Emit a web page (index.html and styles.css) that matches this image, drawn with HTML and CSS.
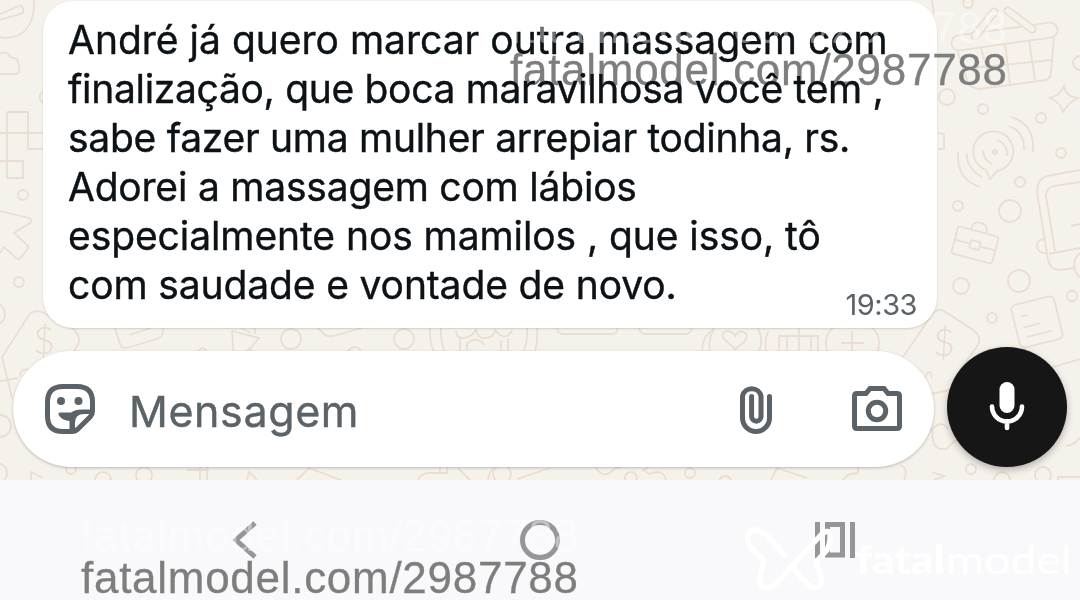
FILE: index.html
```
<!DOCTYPE html>
<html lang="pt-BR">
<head>
    <meta charset="UTF-8">
    <meta name="viewport" content="width=device-width, initial-scale=1.0">
    <title>Conversa</title>
    <link rel="stylesheet" href="styles.css">
</head>
<body>
    <div class="screen">
        <main class="chat">
            <svg class="wallpaper" viewBox="0 0 1080 480" width="1080" height="480" aria-hidden="true">
                <!-- left side -->
                <path d="M34 0Q35 38 4 38L0 37M0 14L21 5Q24 9 23 13L0 20M0 54Q8 50 10 57L17 59Q20 68 19 72L17 74H0"/>
                <path d="M0 133H43M7 112H28V149H43M7 112V178H23V161H0M43 91Q36 97 43 103"/>
                <path d="M0 211L29 218Q33 220 30 223L14 233L28 246Q29 249 20 258Q18 261 14 256L4 247L0 253"/>
                <circle cx="23" cy="195" r="5"/><circle cx="19" cy="282" r="5"/><circle cx="-6" cy="314" r="11"/>
                <path d="M2 357L29 315Q33 310 42 312L72 328Q82 336 78 344L65 370M2 357L12 398M0 381L18 378M20 377Q20 367 30 370"/>
                <circle cx="0" cy="426" r="11"/><circle cx="-3" cy="473" r="10"/>
                <!-- strip under the bubble -->
                <path d="M115 328L120 344Q122 350 130 347L157 339Q164 336 163 328M129 335L151 328M232 331L259 338L240 360M232 331L234 360M241 328L251 333M255 328V334M318 328L324 334Q327 337 333 336L362 328M198 352Q202 345 207 351M347 352Q354 343 361 350M242 355L250 348L253 352"/>
                <circle cx="291" cy="339" r="10"/><circle cx="404" cy="339" r="10"/>
                <path d="M430 328Q429 340 434 352M441 328Q440 341 445 352M527 328Q528 340 524 352M537 328Q538 340 535 352M456 331Q457 339 464 338Q472 337 476 330Q479 340 486 338Q493 338 495 330Q501 338 507 336Q511 334 512 330M460 339V352M467 342V352M501 341V352M508 338V352M466 346Q474 334 485 345"/>
                <path d="M557 328Q558 334 563 334H612Q618 334 617 328M639 328Q640 334 645 334H685Q691 334 692 328M702 352Q702 336 712 331M710 352Q708 340 714 328M758 328Q764 340 759 352M766 352Q764 337 769 331M735 349L724 339Q720 332 727 331Q733 331 735 336Q738 330 744 332Q750 336 743 343ZM779 352V336H818V352M787 352V336M799 352V328M811 352V336"/>
                <rect x="826" y="324" width="53" height="38" rx="18"/><path d="M841 343H864M852 331V352"/>
                <!-- strip under the input -->
                <path d="M31 480V472L43 478M187 470H209M200 465V480M207 466V480M247 480L249 472L257 480M297 480L309 468L341 480M418 480Q421 473 429 473H447V465M440 465V473M458 468L470 480M488 480Q489 470 496 467M517 479L550 468M595 466Q603 480 612 471Q617 466 621 468M648 468L643 470L650 474Q663 468 666 480M771 480L777 468L807 478M843 480Q847 473 858 473V465M900 465Q909 468 904 480M932 472L944 476L934 480M1058 480V477H1080"/>
                <circle cx="71" cy="469" r="5"/><circle cx="103" cy="480" r="8"/><circle cx="144" cy="475" r="8"/><circle cx="502" cy="474" r="9"/><circle cx="631" cy="478" r="6"/><circle cx="690" cy="473" r="5"/><circle cx="725" cy="482" r="6"/><circle cx="971" cy="469" r="5"/><circle cx="1002" cy="480" r="8"/><circle cx="1043" cy="475" r="8"/>
                <!-- basket -->
                <rect x="951" y="29" width="107" height="15" rx="7.5" transform="rotate(-8 1004.500 36.500)"/>
                <path d="M957 50L967 80Q970 89 980 89L1046 80Q1051 78 1051 72L1054 38M981 48L992 86M1005 43L1010 85M1029 40L1035 80M962 69L1052 60"/>
                <path class="handle-edge" d="M994 12L975 36M1008 11L1032 29"/>
                <path class="handle-fill" d="M994 12L975 36M1008 11L1032 29"/>
                <path d="M1064 86Q1066 97 1078 98Q1068 103 1063 112Q1060 101 1049 98Q1060 96 1064 86Z"/>
                <circle cx="968" cy="3" r="5"/><circle cx="947" cy="97" r="8"/><circle cx="983" cy="109" r="5"/><circle cx="1041" cy="118" r="5"/><circle cx="1080" cy="63" r="7"/><circle cx="1061" cy="153" r="5"/><circle cx="1020" cy="182" r="5"/>
                <path d="M932 0L934 14M938 133L944 134V149H938"/>
                <!-- voice bubble -->
                <path d="M986 170A20 20 0 1 1 997 171L990 179ZM983 150Q983 160 992 164M997 140Q1008 144 1007 156M967 153Q966 168 982 177M958 152Q956 179 980 187M1009 126Q1025 132 1024 150M1011 117Q1035 124 1033 152"/>
                <circle cx="995" cy="152" r="2"/>
                <!-- briefcase -->
                <g transform="rotate(15 975 245)">
                    <rect x="954" y="231" width="42" height="28" rx="3"/>
                    <path d="M954 245H970M980 245H996M967 231Q967 222 975 222Q983 222 983 231"/>
                    <rect x="970" y="241" width="10" height="8" rx="1"/>
                </g>
                <path d="M1080 170L1047 176Q1037 179 1037 192L1048 260Q1050 270 1060 270L1075 268M1080 182L1054 186Q1046 188 1046 196L1055 251M1049 254L1080 248M1071 226L1080 224M1080 253Q1068 264 1080 278"/>
                <circle cx="958" cy="206" r="5"/><circle cx="1010" cy="211" r="11"/><circle cx="961" cy="286" r="8"/><circle cx="1019" cy="281" r="11"/><circle cx="1072" cy="296" r="5"/><circle cx="992" cy="318" r="5"/><path d="M1044 239Q1036 240 1037 247Q1040 255 1047 253"/>
                <g transform="rotate(-14 1037 322)">
                    <rect x="1015" y="300" width="44" height="44" rx="5"/>
                    <path d="M1023 313H1030M1023 324H1040M1023 334H1050"/>
                </g>
                <path d="M903 357L933 313Q938 308 944 311L973 330Q982 336 978 345L960 370M925 378Q930 366 932 378M926 395L950 390M933 430Q930 451 947 449Q955 438 962 440M930 432Q940 418 948 429M1066 446Q1075 445 1080 437M1050 368L1080 359"/>
                <text x="33" y="354">$</text>
                <text x="933" y="356">$</text>
            </svg>

            <div class="bubble">
                <p class="message">
                    <span class="line l1">André já quero marcar outra massagem com</span>
                    <span class="line l2">finalização, que boca maravilhosa você tem ,</span>
                    <span class="line l3">sabe fazer uma mulher arrepiar todinha, rs.</span>
                    <span class="line l4">Adorei a massagem com lábios</span>
                    <span class="line l5">especialmente nos mamilos , que isso, tô</span>
                    <span class="line l6">com saudade e vontade de novo.</span>
                </p>
                <time class="time">19:33</time>
            </div>

            <div class="composer">
                <div class="input-bar">
                    <svg class="icon-sticker" viewBox="0 0 50 50" width="50" height="50">
                        <path d="M18 2.500H32Q47.500 2.500 47.500 18V27Q47.500 30 45.500 32.500L32.500 45.500Q30 47.500 27 47.500H18Q2.500 47.500 2.500 32V18Q2.500 2.500 18 2.500Z"/>
                        <circle class="solid" cx="16" cy="17" r="4"/>
                        <circle class="solid" cx="33.500" cy="17" r="4"/>
                        <path class="solid" d="M15 28.500H26Q30 25.500 37 25.500H48V30H39Q30 30 30 39V48H24.500V37Q16 36 13.500 30.500Q13 28.500 15 28.500Z"/>
                    </svg>
                    <span class="placeholder">Mensagem</span>
                    <svg class="icon-clip" viewBox="0 0 32 50" width="32" height="50">
                        <path d="M29.500 12.500V34A13.500 13.500 0 0 1 2.500 34V12A9.500 9.500 0 0 1 21 12V32.500A4.700 4.700 0 0 1 11.600 32.500V12.500"/>
                    </svg>
                    <svg class="icon-camera" viewBox="0 0 50 46" width="50" height="46">
                        <path d="M5 7.500H14L18 2.500H32L36 7.500H45Q47.500 7.500 47.500 10V40Q47.500 42.500 45 42.500H5Q2.500 42.500 2.500 40V10Q2.500 7.500 5 7.500Z"/>
                        <circle cx="25" cy="25" r="8.700"/>
                    </svg>
                </div>
                <button class="mic" aria-label="Gravar áudio">
                    <svg viewBox="0 0 36 50" width="36" height="50">
                        <rect x="10.500" y="0" width="15" height="31" rx="7.500"/>
                        <path d="M3 24.500A15 15 0 0 0 33 24.500M18 39V46"/>
                    </svg>
                </button>
            </div>
        </main>

        <nav class="nav-bar">
            <svg viewBox="0 0 40 40" width="40" height="40"><path d="M30 3L11 20L30 37"/></svg>
            <svg viewBox="0 0 40 40" width="40" height="40"><circle cx="20" cy="20" r="17.500"/></svg>
            <svg viewBox="0 0 40 40" width="40" height="40"><path d="M2.500 2V38M37.500 2V38M12.500 4.500H27.500V35H12.500Z"/></svg>
        </nav>

        <svg class="watermark dark" viewBox="0 0 1080 600" width="1080" height="600">
            <text x="510" y="85" textLength="497">fatalmodel.com/2987788</text>
            <text x="81" y="593" textLength="497">fatalmodel.com/2987788</text>
        </svg>
        <svg class="watermark light" viewBox="0 0 1080 600" width="1080" height="600">
            <text x="510" y="43" textLength="497">fatalmodel.com/2987788</text>
            <text x="81" y="551" textLength="497">fatalmodel.com/2987788</text>
            <path class="butterfly" d="M785 555L765 534Q755 527 749 532Q745 540 752 549L764 561L760 577Q759 587 766 588Q772 588 779 580L820 536Q828 528 830 534Q831 543 827 550L816 562L821 577Q823 587 815 588Q808 587 795 570"/>
            <text class="brand brand-bold" x="856" y="574" textLength="89" lengthAdjust="spacingAndGlyphs">fatal</text>
            <text class="brand" x="946" y="574" textLength="126" lengthAdjust="spacingAndGlyphs">model</text>
        </svg>
    </div>
</body>
</html>
```
FILE: styles.css
```
* {
    box-sizing: border-box;
}
body {
    margin: 0;
    font-family: Inter, "Liberation Sans", sans-serif;
}
.screen {
    position: relative;
    width: 1080px;
    height: 600px;
    overflow: hidden;
}
.chat {
    position: relative;
    height: 480px;
    padding-top: 1px;
    background: #f5f2eb;
    overflow: hidden;
}
.wallpaper {
    position: absolute;
    left: 0;
    top: 0;
    fill: none;
    stroke: #eaded3;
    stroke-width: 1.8;
}
.wallpaper text {
    font-family: Lato, sans-serif;
    font-size: 38px;
    font-weight: 300;
    stroke: none;
    fill: #e8dacd;
}
.wallpaper .handle-edge {
    stroke-width: 9;
    stroke-linecap: round;
}
.wallpaper .handle-fill {
    stroke: #f5f2eb;
    stroke-width: 5.5;
    stroke-linecap: round;
}
.bubble {
    position: relative;
    display: flex;
    justify-content: space-between;
    width: 894px;
    height: 327px;
    margin-left: 43px;
    padding: 14px 20px 0 25px;
    background: #fff;
    border-radius: 30px;
    box-shadow: 0 1px 2px rgba(80, 60, 40, 0.2);
}
.message {
    width: 770px;
    margin: 0;
    color: #0c1216;
    font-size: 39px;
    line-height: 49px;
    white-space: nowrap;
    -webkit-text-stroke: 0.4px #0c1216;
}
.line {
    display: block;
}
.l2 {
    letter-spacing: -0.32px;
}
.l3 {
    letter-spacing: -0.28px;
}
.l4 {
    letter-spacing: -0.21px;
}
.l5 {
    letter-spacing: -0.08px;
}
.l6 {
    letter-spacing: -0.13px;
}
.time {
    align-self: flex-end;
    margin-bottom: 6px;
    color: #5b6368;
    font-size: 29px;
    line-height: 35px;
    letter-spacing: -0.5px;
}
.composer {
    position: relative;
    display: flex;
    align-items: flex-end;
    gap: 13px;
    padding: 19px 13px 0;
}
.input-bar {
    display: flex;
    align-items: center;
    width: 921px;
    height: 116px;
    padding: 0 32px;
    background: #fff;
    border-radius: 58px;
    box-shadow: 0 1px 3px rgba(60, 50, 40, 0.3);
}
.input-bar svg {
    flex: none;
    fill: none;
    stroke: #5b6368;
    stroke-width: 5;
}
.input-bar .solid {
    fill: #5b6368;
    stroke: none;
}
.placeholder {
    flex: 1;
    margin-left: 34px;
    padding-top: 3px;
    color: #5b6368;
    font-size: 43px;
    line-height: 50px;
    letter-spacing: 0.6px;
    -webkit-text-stroke: 0.4px #5b6368;
}
.icon-clip {
    margin-right: 80px;
    stroke-linecap: round;
}
.mic {
    display: flex;
    align-items: center;
    justify-content: center;
    width: 120px;
    height: 120px;
    padding: 0;
    border: none;
    border-radius: 50%;
    background: #161616;
    box-shadow: 0 3px 7px rgba(60, 50, 40, 0.35);
}
.mic rect {
    fill: #fff;
}
.mic path {
    fill: none;
    stroke: #fff;
    stroke-width: 4.6;
    stroke-linecap: round;
}
.nav-bar {
    display: flex;
    justify-content: center;
    align-items: center;
    gap: 255px;
    height: 120px;
    background: #f9f9fc;
}
.nav-bar svg {
    fill: none;
    stroke: #969698;
    stroke-width: 5;
}
.watermark {
    position: absolute;
    left: 0;
    top: 0;
    font-family: "Liberation Sans", Arial, sans-serif;
    font-size: 44px;
}
.dark {
    fill: #7e7e7e;
    stroke: #7e7e7e;
    stroke-width: 0.3;
    mix-blend-mode: darken;
}
.light {
    fill: rgba(255, 255, 255, 0.4);
}
.butterfly {
    fill: none;
    stroke: #fff;
    stroke-width: 5.5;
    stroke-linecap: round;
    stroke-linejoin: round;
}
.brand {
    font-family: Lato, sans-serif;
    font-size: 39px;
    fill: #fff;
}
.brand-bold {
    font-weight: 900;
}
```
